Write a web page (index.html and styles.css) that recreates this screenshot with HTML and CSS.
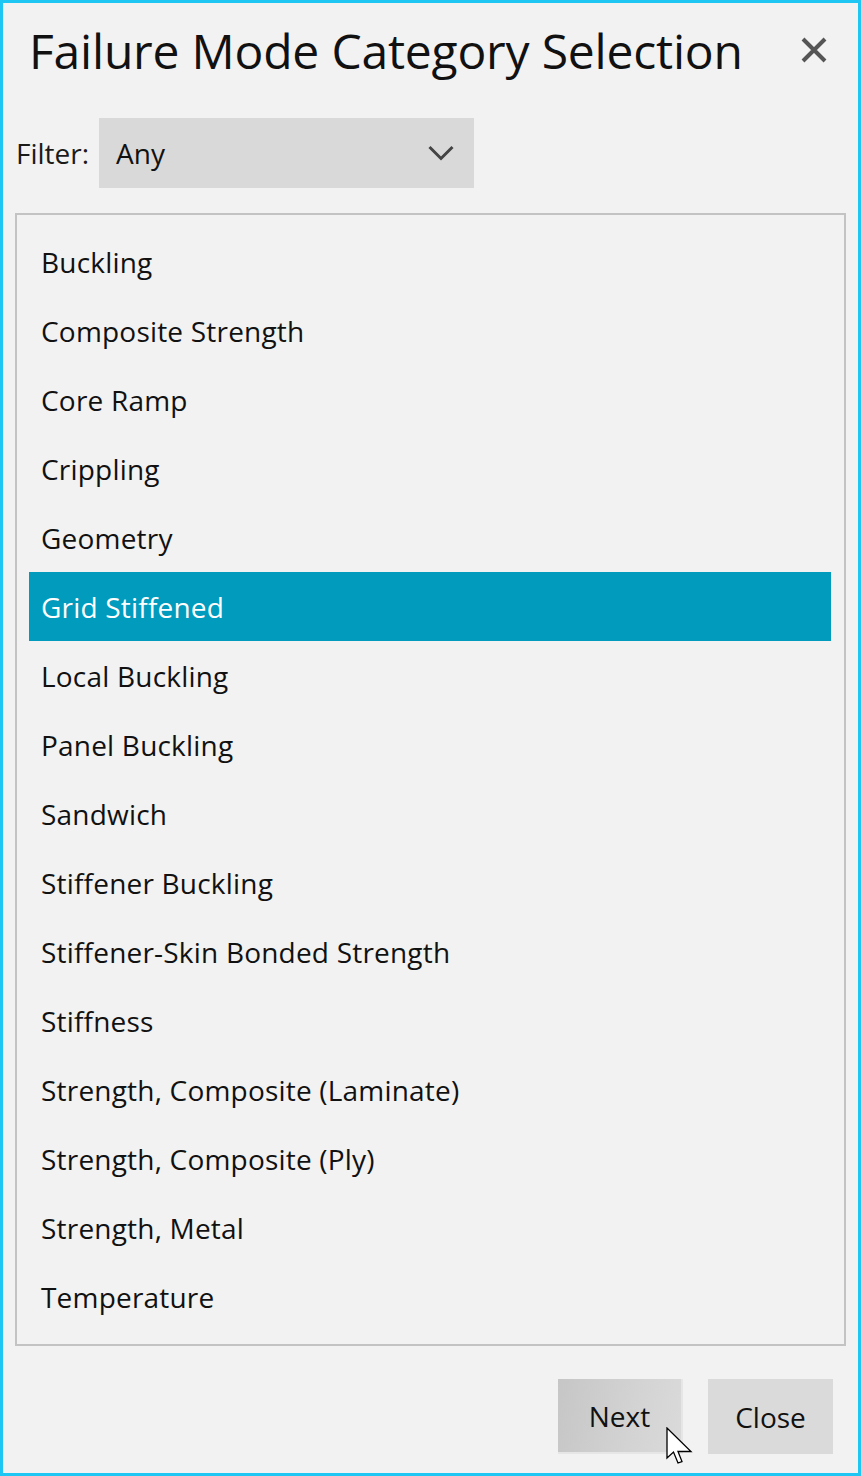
FILE: index.html
```html
<!DOCTYPE html>
<html lang="en">
<head>
<meta charset="utf-8">
<title>Failure Mode Category Selection</title>
<link rel="stylesheet" href="styles.css">
</head>
<body>
<div class="dialog">
  <header class="header">
    <h1 class="title">Failure Mode Category Selection</h1>
    <button class="close-x" aria-label="Close">
      <svg width="26" height="26" viewBox="0 0 26 26"><path d="M2 2 L24 24 M24 2 L2 24" stroke="#555" stroke-width="4" fill="none"/></svg>
    </button>
  </header>
  <div class="filter-row">
    <span class="filter-label">Filter:</span>
    <div class="select">
      <span class="select-value">Any</span>
      <svg class="chevron" width="26" height="16" viewBox="0 0 26 16"><path d="M1.5 2 L13 13.5 L24.5 2" stroke="#444" stroke-width="3" fill="none"/></svg>
    </div>
  </div>
  <ul class="list">
    <li class="item">Buckling</li>
    <li class="item">Composite Strength</li>
    <li class="item">Core Ramp</li>
    <li class="item">Crippling</li>
    <li class="item">Geometry</li>
    <li class="item selected">Grid Stiffened</li>
    <li class="item">Local Buckling</li>
    <li class="item">Panel Buckling</li>
    <li class="item">Sandwich</li>
    <li class="item">Stiffener Buckling</li>
    <li class="item">Stiffener-Skin Bonded Strength</li>
    <li class="item">Stiffness</li>
    <li class="item">Strength, Composite (Laminate)</li>
    <li class="item">Strength, Composite (Ply)</li>
    <li class="item">Strength, Metal</li>
    <li class="item">Temperature</li>
  </ul>
  <footer class="footer">
    <button class="btn btn-hover">Next
      <svg class="cursor" width="30" height="40" viewBox="0 0 30 40"><path d="M1 1 L1 31 L7.5 25 L12 36 L16 34.5 L12 24.5 L25 24.5 Z" fill="#fff" stroke="#000" stroke-width="1.3" stroke-linejoin="miter"/></svg>
    </button>
    <button class="btn">Close</button>
  </footer>
</div>
</body>
</html>
```

FILE: styles.css
```css
* { box-sizing: border-box; }
html, body { margin: 0; padding: 0; }
body {
  width: 861px;
  height: 1476px;
  font-family: "Open Sans", "Noto Sans", "Liberation Sans", sans-serif;
  background: #f2f2f2;
}
.dialog {
  width: 861px;
  height: 1476px;
  border: 3px solid #1ec6f4;
  background: #f2f2f2;
  display: flex;
  flex-direction: column;
}
.header {
  height: 94px;
  display: flex;
  align-items: center;
  justify-content: space-between;
  padding: 0 31px 0 26px;
}
.title {
  margin: 0;
  font-size: 48px;
  font-weight: 400;
  color: #111;
  letter-spacing: -0.2px;
}
.close-x {
  border: 0;
  background: transparent;
  padding: 0;
  width: 26px;
  height: 26px;
  display: flex;
}
.filter-row {
  margin-top: 21px;
  display: flex;
  align-items: center;
  padding-left: 13px;
}
.filter-label {
  font-size: 28px;
  color: #1a1a1a;
  width: 83px;
}
.select {
  width: 375px;
  height: 70px;
  background: #d9d9d9;
  display: flex;
  align-items: center;
  justify-content: space-between;
  padding: 0 20px 0 17px;
}
.select-value {
  font-size: 28px;
  color: #111;
}
.chevron { display: block; }
.list {
  list-style: none;
  margin: 25px 12px 0 12px;
  padding: 12px 13px 0 12px;
  flex: 1;
  border: 2px solid #c3c3c3;
}
.item {
  height: 69px;
  display: flex;
  align-items: center;
  padding-left: 12px;
  font-size: 28px;
  letter-spacing: 0.2px;
  color: #111;
}
.item.selected {
  background: #009bbd;
  color: #fff;
}
.footer {
  margin-top: 33px;
  padding: 0 25px 19px 0;
  display: flex;
  justify-content: flex-end;
  gap: 25px;
}
.btn {
  position: relative;
  width: 125px;
  height: 75px;
  border: 0;
  background: #dadada;
  font-family: inherit;
  font-size: 28px;
  color: #111;
  padding: 0;
}
.btn-hover {
  background: linear-gradient(100deg, #c6c6c6 0%, #d3d3d3 60%, #dadada 100%);
  border-right: 2px solid #e6e6e6;
  border-bottom: 2px solid #e6e6e6;
}
.cursor {
  position: absolute;
  left: 108px;
  top: 48px;
}
```
